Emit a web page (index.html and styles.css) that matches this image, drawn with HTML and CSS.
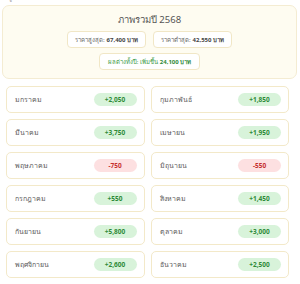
FILE: index.html
```html
<!DOCTYPE html>
<html lang="th">
<head>
<meta charset="utf-8">
<link rel="stylesheet" href="styles.css">
</head>
<body>
<p class="cut">ข้อมูลราคาทองคำรายเดือนเปรียบเทียบ ปี 2568</p>
<section class="summary">
  <h2 class="title">ภาพรวมปี 2568</h2>
  <div class="pills">
    <span class="pill">ราคาสูงสุด: <b>67,400 บาท</b></span>
    <span class="pill">ราคาต่ำสุด: <b>42,550 บาท</b></span>
  </div>
  <div class="pills">
    <span class="pill up">ผลต่างทั้งปี: เพิ่มขึ้น <b>24,100 บาท</b></span>
  </div>
</section>
<section class="grid">
  <div class="card"><span class="m">มกราคม</span><span class="badge pos">+2,050</span></div>
  <div class="card"><span class="m">กุมภาพันธ์</span><span class="badge pos">+1,850</span></div>
  <div class="card"><span class="m">มีนาคม</span><span class="badge pos">+3,750</span></div>
  <div class="card"><span class="m">เมษายน</span><span class="badge pos">+1,950</span></div>
  <div class="card"><span class="m">พฤษภาคม</span><span class="badge neg">-750</span></div>
  <div class="card"><span class="m">มิถุนายน</span><span class="badge neg">-550</span></div>
  <div class="card"><span class="m">กรกฎาคม</span><span class="badge pos">+550</span></div>
  <div class="card"><span class="m">สิงหาคม</span><span class="badge pos">+1,450</span></div>
  <div class="card"><span class="m">กันยายน</span><span class="badge pos">+5,800</span></div>
  <div class="card"><span class="m">ตุลาคม</span><span class="badge pos">+3,000</span></div>
  <div class="card"><span class="m">พฤศจิกายน</span><span class="badge pos">+2,600</span></div>
  <div class="card"><span class="m">ธันวาคม</span><span class="badge pos">+2,500</span></div>
</section>
</body>
</html>
```
FILE: styles.css
```css
html, body {
  margin: 0;
  padding: 0;
  background: #ffffff;
  font-family: "Noto Sans", "DejaVu Sans", sans-serif;
  color: #555;
}
.cut {
  margin: -6px 0 0 0;
  height: 8px;
  overflow: hidden;
  font-size: 6px;
  line-height: 9px;
  color: #999;
  white-space: nowrap;
}
.summary {
  margin: 3px 3px 0 2px;
  height: 74px;
  box-sizing: border-box;
  background: #fefcf1;
  border: 1px solid #f4ecd2;
  border-radius: 7px;
  padding: 7px 0 0 0;
  display: flex;
  flex-direction: column;
  align-items: center;
}
.title {
  margin: 0;
  font-size: 9.5px;
  line-height: 14px;
  font-weight: normal;
  color: #555;
}
.pills {
  display: flex;
  gap: 7px;
  justify-content: center;
  margin-top: 4px;
}
.pills + .pills { margin-top: 5px; }
.pill {
  height: 17px;
  box-sizing: border-box;
  display: inline-flex;
  align-items: center;
  padding: 0 7px;
  background: #fff;
  border: 1px solid #f1e7c6;
  border-radius: 4px;
  font-size: 6px;
  color: #666;
  white-space: nowrap;
}
.pill b { color: #444; margin-left: 2px; }
.pill.up { color: #3c9a45; padding: 0 8px; }
.pill.up b { color: #2e8a38; }
.grid {
  margin: 7px 11px 0 6px;
  display: grid;
  grid-template-columns: 1fr 1fr;
  column-gap: 6px;
  row-gap: 6px;
}
.card {
  height: 27px;
  box-sizing: border-box;
  border: 1px solid #f3e9c9;
  border-radius: 5px;
  background: #fff;
  display: flex;
  align-items: center;
  justify-content: space-between;
  padding: 0 7px 0 8px;
}
.m {
  font-size: 7px;
  color: #5a5a5a;
}
.badge {
  width: 43px;
  height: 13px;
  border-radius: 7px;
  display: inline-flex;
  align-items: center;
  justify-content: center;
  font-size: 6.5px;
  font-weight: bold;
}
.pos { background: #d8f3da; color: #2e8a38; }
.neg { background: #fde0e1; color: #c62f2f; }
```
